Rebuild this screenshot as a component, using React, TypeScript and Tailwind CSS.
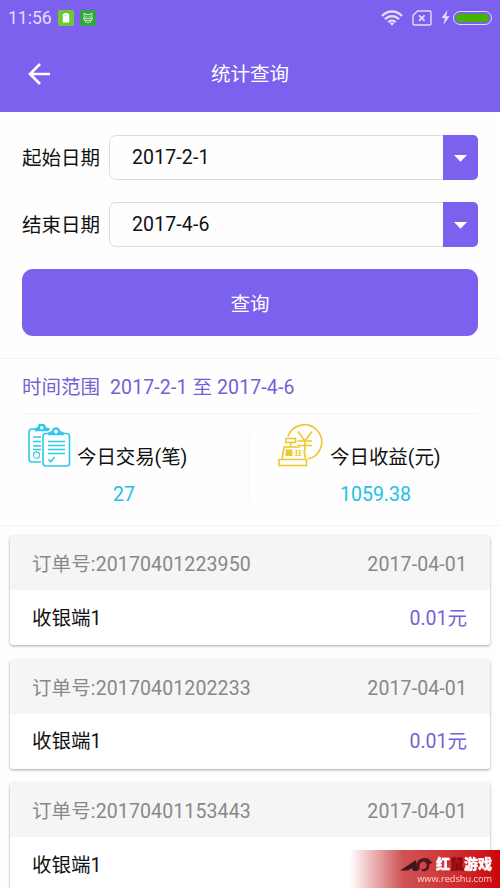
import React from "react";

const orders = [
  { id: "20170401223950", date: "2017-04-01", amount: "0.01元" },
  { id: "20170401202233", date: "2017-04-01", amount: "0.01元" },
  { id: "20170401153443", date: "2017-04-01", amount: "" },
];

function StatusBar() {
  return (
    <div className="flex h-[35px] items-center pl-[8px] pr-[8px] text-[#e3dcff]">
      <span className="w-[50px] pt-[3px] text-[17.5px] leading-none">11:56</span>
      <svg className="h-4 w-4" viewBox="0 0 16 16">
        <rect width="16" height="16" rx="1.5" fill="#6dc73d" />
        <path d="M6.3 3h3.4v1h1.5v8.5H4.8V4h1.5z" fill="#fff" />
        <path d="M6.3 5.2h3.4" stroke="#a5dc86" strokeWidth="0.6" />
      </svg>
      <svg className="ml-[6px] h-4 w-4" viewBox="0 0 16 16" fill="none" stroke="#c9f4cd" strokeWidth="1">
        <rect width="16" height="16" rx="1.5" fill="#37a246" stroke="none" />
        <path d="M4.2 7.500V3l2 1.500h3.600l2-1.500v4.500M3 8.200h10M4 8.200c0 2.800 1.500 4.300 4 4.300s4-1.500 4-4.300M6.300 5.800v1M9.700 5.800v1M5 10.300h6" />
      </svg>
      <svg className="ml-auto h-[18px] w-[24px]" viewBox="0 0 24 18" fill="none" stroke="currentColor" strokeWidth="2.3">
        <path d="M2 7c5.600-6 14.400-6 20 0M5 10.200c4-4.100 10-4.100 14 0M8.300 13.200c2.200-2.100 5.200-2.100 7.400 0" />
        <path d="m9.700 14.300 2.300 2.500 2.300-2.500c-1.400-1.200-3.200-1.200-4.600 0z" fill="currentColor" stroke="none" />
      </svg>
      <svg className="ml-[8px] h-[16px] w-[20px]" viewBox="0 0 20 16" fill="none" stroke="currentColor" strokeWidth="1.4">
        <path d="M5.500 1H18a1 1 0 0 1 1 1v12a1 1 0 0 1-1 1H2a1 1 0 0 1-1-1V5.500z" />
        <path d="m7 5.300 5.600 5.600m0-5.600L7 10.900" strokeWidth="1.7" />
      </svg>
      <svg className="ml-[9px] h-[15px] w-[9px]" viewBox="0 0 9 15">
        <path d="M6.500 0 .5 8h3.400L2.300 15 8.600 6.200H5.200z" fill="currentColor" />
      </svg>
      <div className="ml-[3px] h-[14px] w-[39px] rounded-full border-[1.5px] border-[#e3dcff] p-[2px]">
        <div className="h-full rounded-full bg-[#43b500]" />
      </div>
    </div>
  );
}

function DateField({ label, value }: { label: string; value: string }) {
  return (
    <div className="flex h-[45px] items-center">
      <span className="w-[87px] shrink-0 whitespace-nowrap pt-[2px]">{label}</span>
      <div className="flex h-full flex-1 items-center overflow-hidden rounded-[7px] border border-[#dedede] pl-[22px]">
        <span className="flex-1 pt-[1px] tracking-[0.12px]">{value}</span>
      </div>
      <div className="-ml-[35px] flex h-full w-[35px] items-center justify-center rounded-r-[5px] bg-[#7c60ee]">
        <svg className="mt-[2px] h-[7px] w-[13px]" viewBox="0 0 13 7">
          <path d="M0 0h13L6.500 6.700z" fill="#fff" />
        </svg>
      </div>
    </div>
  );
}

function ClipboardIcon() {
  return (
    <svg className="h-[44px] w-[43px]" viewBox="0 0 43 44" fill="none" stroke="#2fc9e6" strokeWidth="1.6">
      <path d="M8 5H4a3 3 0 0 0-3 3v27a3 3 0 0 0 3 3h9M19 5h3" />
      <path d="M7.500 6.500V5L10.500 3.500a3.200 3.200 0 0 1 6.400 0L20 5v1.500z" fill="#2fc9e6" />
      <circle cx="13.700" cy="3.800" r="1.700" fill="#fff" stroke="none" />
      <path d="M5 13h8M5 17.500h8M5 22h8M5 25.500h8" />
      <circle cx="8.500" cy="31" r="3.100" strokeWidth="1.100" />
      <rect x="15" y="9.500" width="26.500" height="32.500" rx="3" fill="#fff" />
      <path d="M21 10.500V9l3.500-1.500a3.500 3.500 0 0 1 7 0L35 9v1.500z" fill="#2fc9e6" />
      <circle cx="28" cy="7.500" r="1.900" fill="#fff" stroke="none" />
      <path d="M20 17.500h17M20 21.500h17M20 25.500h17M20 29.500h17" />
      <path d="m20.500 35.200 2.200 2.500 4-4.700" />
    </svg>
  );
}

function RegisterIcon() {
  return (
    <svg className="h-[44px] w-[46px]" viewBox="0 0 46 44" fill="none" stroke="#edc72b" strokeWidth="1.6">
      <path d="M10 12.500A17.300 17.300 0 1 1 30 35" />
      <path d="m20 7.500 7 9.500 7-9.500M27 16.500v10.500M19.500 17h14.500M19.500 21.500h14.500" />
      <path d="M8 14.500h9.500v4H8zM12.700 18.500v4" />
      <path d="M4 34.500 6 23h15.500M26 26l1.500 8.500" />
      <path d="M1 35.500h27.500V41.500H1z" />
      <path d="M7.500 25.500h7v6.500h-7z" fill="#edc72b" stroke="none" />
      <path d="M16.500 26.500h7M16.500 29h7M16.500 31.500h7M18.500 26v6M21.500 26v6" strokeWidth="0.8" />
    </svg>
  );
}

function Watermark() {
  return (
    <div className="fixed bottom-0 right-0 flex h-[38px] w-[150px] flex-col items-end bg-gradient-to-r from-[#c60d12]/0 via-[#c4282c]/80 via-[35%] to-[#cc0508] pr-[8px] text-white">
      <div className="flex h-[25px] items-center pt-[3px]">
        <svg className="mr-[2px] h-[17px] w-[34px]" viewBox="0 0 34 17">
          <path d="M0 14.500 16 4l2 11h-5l-1-3-4 2.500z" fill="#42171a" />
          <path d="M18 14c-4-7 1-13 8-12 4 .5 4 4 7 4l-4 3c1 5-3 7-7 6l-1-2c5 1 7-3 5-6s-8-1-6 6z" fill="#54191c" />
        </svg>
        <span className="whitespace-nowrap text-[14px] font-black leading-none [-webkit-text-stroke:0.4px_currentColor]">
          红<span className="text-[#8c0c0f]">鼠</span>游戏
        </span>
      </div>
      <span className="font-['Open_Sans'] text-[9.2px] leading-[8px] text-[#ffd6d0]">www.redshu.com</span>
    </div>
  );
}

export default function App() {
  return (
    <div className="h-[888px] w-[500px] overflow-hidden bg-[#fefefe] font-[Roboto,'Noto_Sans_CJK_SC',sans-serif] text-[19.5px] leading-[28px] text-[#111]">
      <header className="h-[112px] bg-[#7c60ee] text-white">
        <StatusBar />
        <div className="grid h-[77px] grid-cols-[100px_1fr_100px] items-center">
          <svg className="ml-[28px] h-[22px] w-[22px]" viewBox="0 0 22 22" fill="none" stroke="currentColor" strokeWidth="2.6">
            <path d="M12 1 2 11l10 10M2 11h20" />
          </svg>
          <h1 className="pt-[3px] text-center">统计查询</h1>
        </div>
      </header>

      <section className="flex h-[246px] flex-col px-[22px] pt-[23px]">
        <DateField label="起始日期" value="2017-2-1" />
        <div className="h-[22px]" />
        <DateField label="结束日期" value="2017-4-6" />
        <button className="mt-[22px] h-[67px] rounded-[11px] bg-[#7c60ee] pt-[4px] text-white">查询</button>
      </section>

      <section className="h-[168px] border-y border-[#f3f3f3] px-[22px]">
        <div className="flex h-[55px] items-center border-b border-[#f3f3f3] pt-[3px] text-[#7560d6]">
          <span className="w-[88px]">时间范围</span>
          <span className="tracking-[0.12px]">2017-2-1 至 2017-4-6</span>
        </div>
        <div className="grid h-[111px] grid-cols-2">
          <div className="relative pt-[10px] after:absolute after:right-0 after:top-[20px] after:h-[68px] after:w-px after:bg-[#f3f3f3]">
            <div className="flex h-[46px] items-start pl-[6px]">
              <ClipboardIcon />
              <span className="ml-[6px] whitespace-nowrap pt-[20px] tracking-[-0.1px]">今日交易(笔)</span>
            </div>
            <div className="pl-[91px] pt-[11px] text-[#20c1e3]">27</div>
          </div>
          <div className="pt-[10px]">
            <div className="flex h-[46px] items-start pl-[28px]">
              <RegisterIcon />
              <span className="ml-[6px] whitespace-nowrap pt-[20px] tracking-[-0.05px]">今日收益(元)</span>
            </div>
            <div className="pl-[90px] pt-[11px] text-[#20c1e3]">1059.38</div>
          </div>
        </div>
      </section>

      <main className="flex flex-col gap-[14.5px] px-[10px] pt-[10px]">
        {orders.map((order) => (
          <article key={order.id} className="h-[109px] shrink-0 overflow-hidden rounded-[3px] bg-white shadow-[0_1px_3px_rgba(0,0,0,0.35)]">
            <div className="flex h-[54px] items-center justify-between bg-[#f5f5f5] pl-[22px] pr-[23px] pt-[4px] tracking-[0.12px] text-[#888]">
              <span>订单号:{order.id}</span>
              <span>{order.date}</span>
            </div>
            <div className="flex h-[55px] items-center justify-between pl-[22px] pr-[23px] pt-[2px]">
              <span>收银端1</span>
              <span className="text-[#7560d6]">{order.amount}</span>
            </div>
          </article>
        ))}
      </main>
      <Watermark />
    </div>
  );
}
